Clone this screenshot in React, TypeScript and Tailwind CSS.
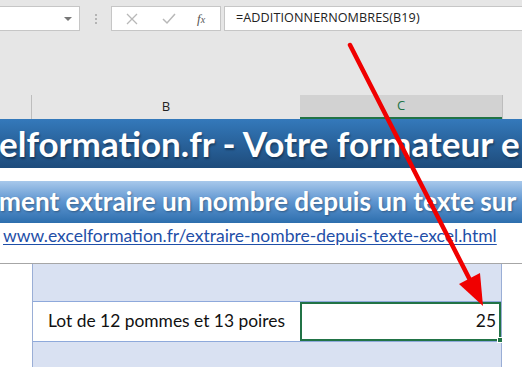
import React from 'react'

const ui = { fontFamily: '"Open Sans", "Noto Sans", sans-serif' }
const cal = { fontFamily: 'Lato, "Open Sans", sans-serif' }

export default function App() {
	return (
		<div className="relative w-[522px] h-[367px] overflow-hidden bg-white">
			{/* Formula bar */}
			<div className="h-[95px] bg-[#e6e6e6] pt-[6px] flex flex-col">
				<div className="flex items-start h-[25px]">
					<div className="w-[80px] h-[25px] bg-white border border-l-0 border-[#c6c6c6] flex items-center justify-end pr-[7px]">
						<div className="w-0 h-0 border-l-[4px] border-r-[4px] border-t-[4px] border-l-transparent border-r-transparent border-t-[#777]" />
					</div>
					<div className="w-[31px] h-[25px] flex flex-col items-center justify-center gap-[2px]">
						<div className="w-[2px] h-[2px] bg-[#b4b4b4]" />
						<div className="w-[2px] h-[2px] bg-[#b4b4b4]" />
						<div className="w-[2px] h-[2px] bg-[#b4b4b4]" />
					</div>
					<div className="w-[110px] h-[25px] bg-white border border-[#c6c6c6] flex items-center">
						<svg width="12" height="12" viewBox="0 0 12 12" className="ml-[14px]">
							<path d="M1 1 L11 11 M11 1 L1 11" stroke="#b8b8b8" strokeWidth="1.3" fill="none" />
						</svg>
						<svg width="14" height="12" viewBox="0 0 14 12" className="ml-[24px]">
							<path d="M1 6 L5 10 L13 1" stroke="#b8b8b8" strokeWidth="1.5" fill="none" />
						</svg>
						<span className="ml-[21px] text-[13px] italic text-[#555] leading-none" style={{ fontFamily: '"Liberation Serif", serif' }}>
							f<span className="text-[10px]">x</span>
						</span>
					</div>
					<div className="ml-[3px] flex-1 h-[25px] bg-white border border-r-0 border-[#c6c6c6] flex items-center pl-[11px]">
						<span className="text-[12.6px] text-[#222] tracking-[0.1px]" style={ui}>=ADDITIONNERNOMBRES(B19)</span>
					</div>
				</div>
			</div>

			{/* Column headers */}
			<div className="flex h-[24px] bg-[#e6e6e6] text-[13px]" style={ui}>
				<div className="w-[32px] border-r border-[#bdbdbd]" />
				<div className="w-[268px] flex items-center justify-center text-[#222]">B</div>
				<div className="w-[202px] bg-[#d2d2d2] border-b-2 border-[#217346] flex items-center justify-center text-[#217346]">C</div>
				<div className="flex-1 border-l border-[#bdbdbd]" />
			</div>

			{/* Title banner */}
			<div className="h-[49px] bg-gradient-to-b from-[#3479bb] to-[#1e4c7c] flex items-center overflow-hidden">
				<span className="whitespace-nowrap text-white font-bold text-[35px] ml-[-1px] [text-shadow:1px_2px_2px_rgba(0,0,0,0.35)]" style={cal}>
					elformation.fr - Votre formateur e
				</span>
			</div>
			<div className="h-[13px] bg-white" />

			{/* Sub banner */}
			<div className="h-[42px] bg-gradient-to-b from-[#a8c8eb] via-[#5c94cf] to-[#2d6fae] flex items-center overflow-hidden">
				<span className="whitespace-nowrap text-white font-bold text-[26.2px] ml-[-1px] [text-shadow:1px_1px_2px_rgba(0,0,0,0.3)]" style={cal}>
					ment extraire un nombre depuis un texte sur
				</span>
			</div>

			{/* Link */}
			<div className="h-[27px] flex items-center pl-[3px]">
				<span className="whitespace-nowrap text-[17.5px] text-[#1f4fa8] underline underline-offset-2" style={cal}>
					www.excelformation.fr/extraire-nombre-depuis-texte-excel.html
				</span>
			</div>
			<div className="h-[14px] bg-white border-b border-[#a6a6a6]" />

			{/* Table area */}
			<div className="flex h-[103px]">
				<div className="w-[32px] bg-white" />
				<div className="w-[470px] bg-[#d9e1f2] border-l border-r border-[#9aaed6] flex flex-col">
					<div className="h-[38px] border-b border-[#8ea9db]" />
					<div className="h-[40px] bg-white border-b border-[#8ea9db] flex">
						<div className="w-[267px] flex items-center pl-[15px] text-[17.4px] text-[#111]" style={cal}>
							Lot de 12 pommes et 13 poires
						</div>
						<div className="relative flex-1 border-2 border-[#217346] flex items-center justify-end pr-[3px] text-[17.4px] text-[#111]" style={cal}>
							25
							<div className="absolute right-[-4px] bottom-[-4px] w-[6px] h-[6px] bg-[#217346] border border-white" />
						</div>
					</div>
					<div className="flex-1" />
				</div>
				<div className="flex-1 bg-white" />
			</div>

			{/* Red arrow */}
			<svg className="absolute left-0 top-0 pointer-events-none" width="522" height="367" viewBox="0 0 522 367">
				<line x1="350" y1="45" x2="470" y2="280" stroke="#f00000" strokeWidth="4.5" strokeLinecap="round" />
				<polygon points="483,306 459,284 480,273" fill="#f00000" />
			</svg>
		</div>
	)
}
